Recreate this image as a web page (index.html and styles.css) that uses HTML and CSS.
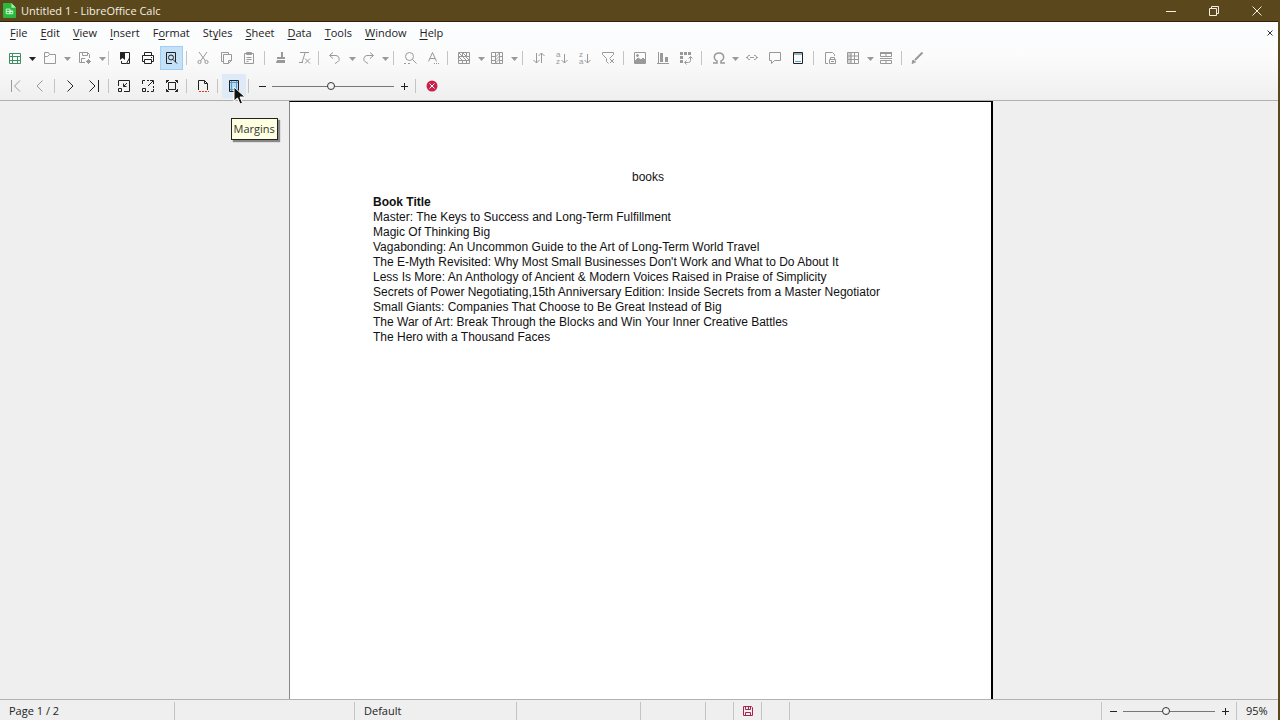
FILE: index.html
```html
<!DOCTYPE html>
<html lang="en">
<head>
<meta charset="utf-8">
<title>Untitled 1 - LibreOffice Calc</title>
<link rel="stylesheet" href="styles.css">
</head>
<body>
<svg class="sprite" aria-hidden="true">
  <symbol id="arrow" viewBox="0 0 10 16"><path d="M2 7h7L5.500 11z" fill="currentColor" stroke="none"/></symbol>
  <symbol id="new" viewBox="0 0 16 16"><path d="M2.500 3.500h11v10h-11zM2.500 6.500h11M2.500 10.500h11M5.500 3.500v10M10.500 6.500v7"/></symbol>
  <symbol id="open" viewBox="0 0 16 16"><path d="M2.500 13.500v-11h4l1 2h6v9zM2.500 6.500h3l2-2"/></symbol>
  <symbol id="save" viewBox="0 0 16 16"><path d="M8 12.500H2.500v-10h8l2 2V8M5.500 2.500v3h5v-3M4.500 12.500v-4H8M11.500 9v5M9 11.500h5M10 10l3 3M13 10l-3 3"/></symbol>
  <symbol id="export" viewBox="0 0 16 16"><path d="M3 2h5v8L5.500 8 3 10z" fill="currentColor" stroke="none"/><path d="M8 2.500h4.500v8M4.500 11v2.500H9M12.500 8l-3 5.500h3z"/></symbol>
  <symbol id="print" viewBox="0 0 16 16"><path d="M4.500 5V2.500h7V5M4 11.500H2.500v-6h11v6H12M4.500 9.500h7v4h-7zM11 7.500h1"/></symbol>
  <symbol id="preview" viewBox="0 0 16 16"><path d="M9 13.500H3.500v-11h9V12"/><circle cx="8" cy="7.500" r="2.500"/><path d="M10 9.500l4 4"/></symbol>
  <symbol id="cut" viewBox="0 0 16 16"><path d="M4 2l6.500 9M12 2l-6.500 9"/><circle cx="4.500" cy="12" r="1.600"/><circle cx="11.500" cy="12" r="1.600"/></symbol>
  <symbol id="copy" viewBox="0 0 16 16"><path d="M5.500 11.500h-2v-9h7v2M5.500 4.500h8v6l-3 3h-5zM10.500 13.500v-3h3"/></symbol>
  <symbol id="paste" viewBox="0 0 16 16"><path d="M3.500 3.500h9v10h-9zM5.500 2.500h5v2h-5zM5.500 7.500h5M5.500 9.500h5M5.500 11.500h2"/></symbol>
  <symbol id="clone" viewBox="0 0 16 16"><path d="M8 2h2v5h2v2H4V7h4zM4 10h8v3H3z" fill="currentColor" stroke="none"/></symbol>
  <symbol id="clear" viewBox="0 0 16 16"><path d="M4 2.500h9M9 3L6 12.500M3 12.500h4M9 8.500l5 5M14 8.500l-5 5"/></symbol>
  <symbol id="undo" viewBox="0 0 16 16"><path d="M6 2.500L2.500 5.500 6 8.500M3 5.500h6a3.500 3.500 0 0 1 1.500 6.500L8 13.500"/></symbol>
  <symbol id="redo" viewBox="0 0 16 16"><path d="M10 2.500l3.500 3-3.500 3M13 5.500H7A3.500 3.500 0 0 0 5.500 12L8 13.500"/></symbol>
  <symbol id="find" viewBox="0 0 16 16"><circle cx="7.500" cy="6.500" r="4"/><path d="M10.500 9.500l4 4M2 13.500h2M6 13.500h2"/></symbol>
  <symbol id="spell" viewBox="0 0 16 16"><path d="M3.500 11.500L7.500 2.500l4 9M5 8.500h5M9 13.500h1M11 13.500h1M13 13.500h1"/></symbol>
  <symbol id="row" viewBox="0 0 16 16"><path d="M2.500 2.500h11v11h-11zM2.500 6.500h11M2.500 10.500h11M6.500 2.500v4M10.500 2.500v4M6.500 10.500v3M10.500 10.500v3M3 7l3 3M7 7l3 3M10 7l3 3M3 3l3 3M7 3l3 3"/></symbol>
  <symbol id="column" viewBox="0 0 16 16"><path d="M2.500 2.500h11v11h-11zM2.500 6.500h4M2.500 10.500h4M10.500 6.500h3M10.500 10.500h3M6.500 2.500v11M10.500 2.500v11M6.500 7l4-4M6.500 10l4-4M6.500 13l4-4"/></symbol>
  <symbol id="sort" viewBox="0 0 16 16"><path d="M5.500 3v10M2.500 10l3 3 3-3M10.500 13V3M7.500 6l3-3 3 3"/></symbol>
  <symbol id="down" viewBox="0 0 16 16"><path d="M10.500 4v9M7.500 10l3 3 3-3"/></symbol>
  <symbol id="filter" viewBox="0 0 16 16"><path d="M2.500 2.500h11v2l-4 4M2.500 2.500v2l4 4v3l2 2M10 9l4 4M14 9l-4 4"/></symbol>
  <symbol id="image" viewBox="0 0 16 16"><path d="M2.500 2.500h11v11h-11z"/><path d="M3 11l3-3 3 2 2-2 2 2v3H3z" fill="currentColor"/><circle cx="5.500" cy="5.500" r="1" fill="currentColor"/></symbol>
  <symbol id="chart" viewBox="0 0 16 16"><path d="M3.500 2v11M2 13.500h12"/><path d="M5 3h3v9H5zM10 7h3v5h-3z" fill="currentColor" stroke="none"/></symbol>
  <symbol id="pivot" viewBox="0 0 16 16"><path d="M2 2h3v3H2zM6 2h3v3H6zM10 2h3v3h-3zM2 6h3v3H2zM2 10h3v3H2z" fill="currentColor" stroke="none"/><path d="M12.500 7v3.500a2 2 0 0 1-2 2H7M10.500 8.500l2-2 2 2M8.500 10.500l-2 2 2 2"/></symbol>
  <symbol id="omega" viewBox="0 0 16 16"><path d="M2 13h4v-2C2 9 2.500 3 8 3s6 6 2 8v2h4" stroke-width="1.500"/></symbol>
  <symbol id="link" viewBox="0 0 16 16"><path d="M6 5.500H4.500l-1 1.500v1l1 1.500H6M10 5.500h1.500l1 1.500v1l-1 1.500H10M2 7.500h2M6 7.500h4M12 7.500h2"/></symbol>
  <symbol id="comment" viewBox="0 0 16 16"><path d="M2.500 2.500h11v8h-6l-3 3v-3h-2z"/></symbol>
  <symbol id="header" viewBox="0 0 16 16"><path d="M4 2h8v3H4z" fill="#91b4ca" stroke="none"/><path d="M3.500 2.500h9v11h-9z"/><path d="M5 11.500h6" stroke="#58a9d4"/></symbol>
  <symbol id="area" viewBox="0 0 16 16"><path d="M6 13.500H3.500v-11h7l2 2V6M7.500 9.500h6v4h-6zM8.500 9.500v-2h4v2M9 11.500h3"/></symbol>
  <symbol id="freeze" viewBox="0 0 16 16"><path d="M2.500 2.500h11v11h-11zM2.500 9.500h11M9.500 2.500v11M2.500 6h11M6 2.500v11"/><path d="M3 3h3v10H3z" fill="currentColor" opacity=".4"/></symbol>
  <symbol id="split" viewBox="0 0 16 16"><path d="M2.500 3.500h11v3h-11zM2.500 10.500h11v3h-11zM8 10v4M2 8.500h12M8 3v3"/><path d="M2 2h12v2H2z" fill="currentColor" stroke="none"/></symbol>
  <symbol id="draw" viewBox="0 0 16 16"><path d="M13.500 2.500L6 10" stroke-width="2"/><path d="M3 13.500l1-3.500 2.500 2z" fill="currentColor"/></symbol>
  <symbol id="first" viewBox="0 0 16 16"><path d="M3.500 2v12M12 2.500L6.500 8l5.500 5.500"/></symbol>
  <symbol id="prev" viewBox="0 0 16 16"><path d="M10.500 2.500L5 8l5.500 5.500"/></symbol>
  <symbol id="next" viewBox="0 0 16 16"><path d="M5.500 2.500L11 8l-5.500 5.500"/></symbol>
  <symbol id="last" viewBox="0 0 16 16"><path d="M3.500 2.500L9 8l-5.500 5.500M12.500 2v12"/></symbol>
  <symbol id="scale" viewBox="0 0 16 16"><path d="M2.500 8V2.500h11v11H8M2.500 10.500h3v3h-3zM11 5L7.500 8.500M7.500 5.500v3h3"/></symbol>
  <symbol id="expand" viewBox="0 0 16 16"><path d="M2.500 6V2.500H5M7 2.500h2M10 2.500h3.500V6M13.500 8v2M13.500 11v2.500H11M2.500 10.500h3v3h-3zM8 8l5-5M7 13.500h2"/></symbol>
  <symbol id="full" viewBox="0 0 16 16"><path d="M4.500 4.500h7v7h-7zM2.500 5V2.500H5M11 2.500h2.500V5M13.500 11v2.500H11M5 13.500H2.500V11M2.500 2.500l2 2M13.500 2.500l-2 2M13.500 13.500l-2-2M2.500 13.500l2-2"/></symbol>
  <symbol id="format" viewBox="0 0 16 16"><path d="M3.500 12V2.500h6l3 3V12M9.500 2.500v3h3"/><path d="M4 13.500h2M7 13.500h2M10 13.500h2M13 13.500h1" stroke="#e0361f"/></symbol>
  <symbol id="margins" viewBox="0 0 16 16"><path d="M3.500 2.500h9v11h-9z" fill="#b5dcf5"/><path d="M5.500 3v10M10.500 3v10M4 4.500h8M4 11.500h8" stroke="#5b9cc8"/></symbol>
  <symbol id="disk" viewBox="0 0 16 16"><path d="M3.500 3.500h8l1 1v8h-9zM5.500 3.500v3h5v-3M5.500 12.500v-3h5v3M8.500 4v2"/></symbol>
</svg>

<div class="window">
  <header class="titlebar">
    <svg class="logo" viewBox="0 0 14 16"><path d="M1 0h8l5 5v10a1 1 0 0 1-1 1H1a1 1 0 0 1-1-1V1a1 1 0 0 1 1-1z" fill="#2cb83f"/><path d="M9 0l5 5H9z" fill="#a4eea5"/><path d="M3.500 6.500h4v5h-4zM3.500 9h7M7.500 8.500h3v3h-3z" fill="none" stroke="#dfffdc"/></svg>
    <h1 class="title">Untitled 1 - LibreOffice Calc</h1>
    <div class="controls">
      <button class="control" aria-label="Minimize"><svg class="icon" viewBox="0 0 16 16"><path d="M3 8.500h10"/></svg></button>
      <button class="control" aria-label="Restore"><svg class="icon" viewBox="0 0 16 16"><path d="M3.500 5.500h7v7h-7zM5.500 5.500v-2h7v7h-2"/></svg></button>
      <button class="control" aria-label="Close"><svg class="icon" viewBox="0 0 16 16"><path d="M3.500 3.500l9 9M12.500 3.500l-9 9"/></svg></button>
    </div>
  </header>

  <div class="tools">
    <nav class="menubar">
      <button class="menu"><u>F</u>ile</button>
      <button class="menu"><u>E</u>dit</button>
      <button class="menu"><u>V</u>iew</button>
      <button class="menu"><u>I</u>nsert</button>
      <button class="menu">F<u>o</u>rmat</button>
      <button class="menu">St<u>y</u>les</button>
      <button class="menu"><u>S</u>heet</button>
      <button class="menu"><u>D</u>ata</button>
      <button class="menu"><u>T</u>ools</button>
      <button class="menu"><u>W</u>indow</button>
      <button class="menu"><u>H</u>elp</button>
      <button class="close-doc" aria-label="Close document"><svg class="mini" viewBox="0 0 8 8"><path d="M1.500 1.500l5 5M6.500 1.500l-5 5"/></svg></button>
    </nav>

    <div class="toolbar standard">
      <div class="group start">
        <button class="tool green" aria-label="New"><svg class="icon"><use href="#new"/></svg></button><button class="drop dark" aria-label="New options"><svg class="caret"><use href="#arrow"/></svg></button>
        <button class="tool" aria-label="Open"><svg class="icon"><use href="#open"/></svg></button><button class="drop" aria-label="Open options"><svg class="caret"><use href="#arrow"/></svg></button>
        <button class="tool" aria-label="Save"><svg class="icon"><use href="#save"/></svg></button><button class="drop" aria-label="Save options"><svg class="caret"><use href="#arrow"/></svg></button>
      </div>
      <div class="group">
        <button class="tool dark" aria-label="Export as PDF"><svg class="icon"><use href="#export"/></svg></button>
        <button class="tool dark" aria-label="Print"><svg class="icon"><use href="#print"/></svg></button>
        <button class="tool dark active" aria-label="Print preview" aria-pressed="true"><svg class="icon"><use href="#preview"/></svg></button>
      </div>
      <div class="group">
        <button class="tool" aria-label="Cut"><svg class="icon"><use href="#cut"/></svg></button>
        <button class="tool" aria-label="Copy"><svg class="icon"><use href="#copy"/></svg></button>
        <button class="tool" aria-label="Paste"><svg class="icon"><use href="#paste"/></svg></button>
      </div>
      <div class="group">
        <button class="tool" aria-label="Clone formatting"><svg class="icon"><use href="#clone"/></svg></button>
        <button class="tool" aria-label="Clear formatting"><svg class="icon"><use href="#clear"/></svg></button>
      </div>
      <div class="group">
        <button class="tool" aria-label="Undo"><svg class="icon"><use href="#undo"/></svg></button><button class="drop" aria-label="Undo options"><svg class="caret"><use href="#arrow"/></svg></button>
        <button class="tool" aria-label="Redo"><svg class="icon"><use href="#redo"/></svg></button><button class="drop" aria-label="Redo options"><svg class="caret"><use href="#arrow"/></svg></button>
      </div>
      <div class="group">
        <button class="tool" aria-label="Find and replace"><svg class="icon"><use href="#find"/></svg></button>
        <button class="tool" aria-label="Spelling"><svg class="icon"><use href="#spell"/></svg></button>
      </div>
      <div class="group">
        <button class="tool" aria-label="Row"><svg class="icon"><use href="#row"/></svg></button><button class="drop" aria-label="Row options"><svg class="caret"><use href="#arrow"/></svg></button>
        <button class="tool" aria-label="Column"><svg class="icon"><use href="#column"/></svg></button><button class="drop" aria-label="Column options"><svg class="caret"><use href="#arrow"/></svg></button>
      </div>
      <div class="group">
        <button class="tool" aria-label="Sort"><svg class="icon"><use href="#sort"/></svg></button>
        <button class="tool" aria-label="Sort ascending"><svg class="icon" viewBox="0 0 16 16"><text class="glyph" x="2" y="7">a</text><text class="glyph" x="2" y="14">z</text><use href="#down"/></svg></button>
        <button class="tool" aria-label="Sort descending"><svg class="icon" viewBox="0 0 16 16"><text class="glyph" x="2" y="7">z</text><text class="glyph" x="2" y="14">a</text><use href="#down"/></svg></button>
        <button class="tool" aria-label="AutoFilter"><svg class="icon"><use href="#filter"/></svg></button>
      </div>
      <div class="group">
        <button class="tool" aria-label="Insert image"><svg class="icon"><use href="#image"/></svg></button>
        <button class="tool" aria-label="Insert chart"><svg class="icon"><use href="#chart"/></svg></button>
        <button class="tool" aria-label="Pivot table"><svg class="icon"><use href="#pivot"/></svg></button>
      </div>
      <div class="group">
        <button class="tool" aria-label="Special character"><svg class="icon"><use href="#omega"/></svg></button><button class="drop" aria-label="Special character options"><svg class="caret"><use href="#arrow"/></svg></button>
        <button class="tool" aria-label="Hyperlink"><svg class="icon"><use href="#link"/></svg></button>
        <button class="tool" aria-label="Comment"><svg class="icon"><use href="#comment"/></svg></button>
        <button class="tool dark" aria-label="Headers and footers"><svg class="icon"><use href="#header"/></svg></button>
      </div>
      <div class="group">
        <button class="tool" aria-label="Print area"><svg class="icon"><use href="#area"/></svg></button>
        <button class="tool" aria-label="Freeze rows and columns"><svg class="icon"><use href="#freeze"/></svg></button><button class="drop" aria-label="Freeze options"><svg class="caret"><use href="#arrow"/></svg></button>
        <button class="tool" aria-label="Split window"><svg class="icon"><use href="#split"/></svg></button>
      </div>
      <div class="group start">
        <button class="tool" aria-label="Draw functions"><svg class="icon"><use href="#draw"/></svg></button>
      </div>
    </div>

    <div class="toolbar preview">
      <div class="group">
        <button class="tool" aria-label="First page"><svg class="icon"><use href="#first"/></svg></button>
        <button class="tool" aria-label="Previous page"><svg class="icon"><use href="#prev"/></svg></button>
      </div>
      <div class="group">
        <button class="tool dark" aria-label="Next page"><svg class="icon"><use href="#next"/></svg></button>
        <button class="tool dark" aria-label="Last page"><svg class="icon"><use href="#last"/></svg></button>
      </div>
      <div class="group">
        <button class="tool dark" aria-label="Zoom in"><svg class="icon"><use href="#scale"/></svg></button>
        <button class="tool dark" aria-label="Zoom out"><svg class="icon"><use href="#expand"/></svg></button>
        <button class="tool dark" aria-label="Full screen"><svg class="icon"><use href="#full"/></svg></button>
      </div>
      <div class="group">
        <button class="tool dark" aria-label="Format page"><svg class="icon"><use href="#format"/></svg></button>
      </div>
      <div class="group">
        <div class="tip-anchor">
          <button class="tool dark hover" aria-describedby="tip" aria-label="Margins"><svg class="icon"><use href="#margins"/></svg></button>
          <svg class="cursor" viewBox="0 0 13 20"><path d="M1 1v14l3.500-3 2.500 6 2.500-1-2.500-6H12z" fill="#111" stroke="#fff"/></svg>
          <span class="tip" id="tip" role="tooltip">Margins</span>
        </div>
      </div>
      <div class="group">
        <button class="step" aria-label="Decrease scaling"><svg class="mini" viewBox="0 0 8 8"><path d="M1 4.500h7"/></svg></button>
        <input class="range" type="range" min="0" max="100" value="49" aria-label="Scaling factor">
        <button class="step" aria-label="Increase scaling"><svg class="mini" viewBox="0 0 8 8"><path d="M1 4.500h7M4.500 1v7"/></svg></button>
      </div>
      <div class="group last">
        <button class="tool" aria-label="Close preview"><svg class="icon" viewBox="0 0 16 16"><circle cx="8" cy="8" r="5.500" fill="#c9214e" stroke="none"/><path d="M5.500 5.500l5 5M10.500 5.500l-5 5" stroke="#fff"/></svg></button>
      </div>
    </div>
  </div>

  <main class="workspace">
    <article class="page">
      <table class="sheet">
        <caption class="sheet-name">books</caption>
        <thead><tr><th>Book Title</th></tr></thead>
        <tbody>
          <tr><td>Master: The Keys to Success and Long-Term Fulfillment</td></tr>
          <tr><td>Magic Of Thinking Big</td></tr>
          <tr><td>Vagabonding: An Uncommon Guide to the Art of Long-Term World Travel</td></tr>
          <tr><td>The E-Myth Revisited: Why Most Small Businesses Don't Work and What to Do About It</td></tr>
          <tr><td>Less Is More: An Anthology of Ancient &amp; Modern Voices Raised in Praise of Simplicity</td></tr>
          <tr><td>Secrets of Power Negotiating,15th Anniversary Edition: Inside Secrets from a Master Negotiator</td></tr>
          <tr><td>Small Giants: Companies That Choose to Be Great Instead of Big</td></tr>
          <tr><td>The War of Art: Break Through the Blocks and Win Your Inner Creative Battles</td></tr>
          <tr><td>The Hero with a Thousand Faces</td></tr>
        </tbody>
      </table>
    </article>
  </main>

  <footer class="status">
    <span class="cell">Page 1 / 2</span>
    <span class="cell"></span>
    <span class="cell">Default</span>
    <span class="cell"></span>
    <span class="cell"></span>
    <span class="cell"></span>
    <span class="cell modified"><svg class="icon"><use href="#disk"/></svg></span>
    <span class="cell"></span>
    <span class="cell"></span>
    <span class="cell zoom">
      <button class="step" aria-label="Zoom out"><svg class="mini" viewBox="0 0 8 8"><path d="M1 4.500h7"/></svg></button>
      <input class="range" type="range" min="0" max="100" value="46" aria-label="Zoom">
      <button class="step" aria-label="Zoom in"><svg class="mini" viewBox="0 0 8 8"><path d="M1 4.500h7M4.500 1v7"/></svg></button>
    </span>
    <span class="cell percent">95%</span>
  </footer>
</div>
</body>
</html>
```
FILE: styles.css
```css
* { box-sizing: border-box; }
body {
  margin: 0;
  background: #5a471b;
  font: 11px/16px "Open Sans", "Noto Sans", sans-serif;
  color: #222;
}
button {
  border: 0;
  padding: 0;
  background: none;
  color: inherit;
  font: inherit;
}
svg {
  display: block;
  fill: none;
  stroke: currentColor;
}
.sprite { display: none; }
.icon { width: 16px; height: 16px; }
.mini { width: 8px; height: 8px; }
.caret { width: 10px; height: 16px; }
.glyph {
  font: 8px "Liberation Sans", sans-serif;
  fill: currentColor;
  stroke: none;
}

.window {
  display: flex;
  flex-direction: column;
  height: 100vh;
  padding-right: 2px;
}
.titlebar {
  display: flex;
  align-items: center;
  height: 22px;
  padding-left: 3px;
  border-bottom: 1px solid #391f08;
  background: #5a471b;
  color: #f4efe2;
}
.logo { width: 13px; height: 15px; stroke: none; }
.title {
  margin: 0;
  padding-left: 5px;
  font-size: 11px;
  font-weight: 400;
}
.controls { display: flex; margin-left: auto; }
.control {
  display: grid;
  place-items: center;
  width: 43px;
  height: 20px;
}

.tools {
  height: 79px;
  border-bottom: 1px solid #b1b1b1;
  background: linear-gradient(#fcfeff, #fbfbfb 45%, #efefef);
}
.menubar {
  display: flex;
  align-items: center;
  gap: 13px;
  height: 22px;
  padding: 0 4px 0 10px;
}
.menu u { text-underline-offset: 2px; }
.close-doc { margin-left: auto; color: #333; }

.toolbar { display: grid; color: #999; }
.standard {
  grid-template-columns: 109px 78px 78px 54px 75px 54px 75px 101px 78px 112px 88px 1fr;
  height: 28px;
}
.preview {
  grid-template-columns: 55px 54px 78px 31px 31px 167px 1fr;
  height: 28px;
}
.group {
  position: relative;
  display: flex;
  align-items: center;
  justify-content: center;
}
.group:not(:last-child)::after {
  content: "";
  position: absolute;
  top: 7px;
  right: 0;
  width: 1px;
  height: 14px;
  background: #c4c4c4;
}
.start { justify-content: flex-start; gap: 1px; padding-left: 3px; }
.last { justify-content: flex-start; padding-left: 4px; }
.tool {
  display: grid;
  place-items: center;
  flex: none;
  width: 23px;
  height: 24px;
}
.preview .tool { width: 24px; }
.drop { flex: none; width: 10px; }
.dark { color: #222; }
.green { color: #3f8d66; }
.active {
  border: 1px solid #9fcdf3;
  background: #c5e1f8;
}
.hover { background: #deebf6; }

.tip-anchor { position: relative; }
.cursor {
  position: absolute;
  z-index: 2;
  top: 12px;
  left: 11px;
  width: 13px;
  height: 20px;
}
.tip {
  position: absolute;
  z-index: 1;
  top: 44px;
  left: 9px;
  padding: 2px;
  border: 1px solid #222;
  background: #ffffe1;
  box-shadow: 2px 2px 1px #888;
  color: #333;
}

.step { display: grid; place-items: center; width: 16px; height: 16px; color: #222; }
.range {
  flex: none;
  width: 122px;
  height: 14px;
  margin: 0 2px;
  appearance: none;
  background: linear-gradient(#777, #777) center / 100% 1px no-repeat;
}
.range::-webkit-slider-thumb {
  appearance: none;
  width: 8px;
  height: 8px;
  border: 1px solid #333;
  border-radius: 50%;
  background: #f4f4f4;
}

.workspace {
  display: grid;
  grid-template-columns: 289fr 704fr 285fr;
  flex: 1;
  background: #efefef;
}
.page {
  grid-column: 2;
  padding: 68px 68px 0 83px;
  border: solid #000;
  border-width: 1px 2px 0 1px;
  border-left-color: #888;
  background: #fff;
}
.sheet {
  width: 100%;
  border-collapse: collapse;
  font: 12px/15px "Liberation Sans", Arial, sans-serif;
  color: #111;
}
.sheet-name { padding-bottom: 10px; }
.sheet th, .sheet td {
  padding: 0;
  text-align: left;
  white-space: nowrap;
}

.status {
  display: grid;
  grid-template-columns: 175px 180px 162px 124px 65px 28px 28px 28px 1fr 135px 41px;
  height: 21px;
  padding-top: 2px;
  border-top: 1px solid #b1b1b1;
  background: #efefef;
}
.cell {
  display: flex;
  align-items: center;
  padding-left: 9px;
  border-right: 1px solid #c4c4c4;
}
.modified { padding-left: 6px; color: #a82350; }
.percent { border: 0; }
.zoom { padding: 0; justify-content: center; }
.zoom .range { width: 92px; margin: 0 2px; }
```
